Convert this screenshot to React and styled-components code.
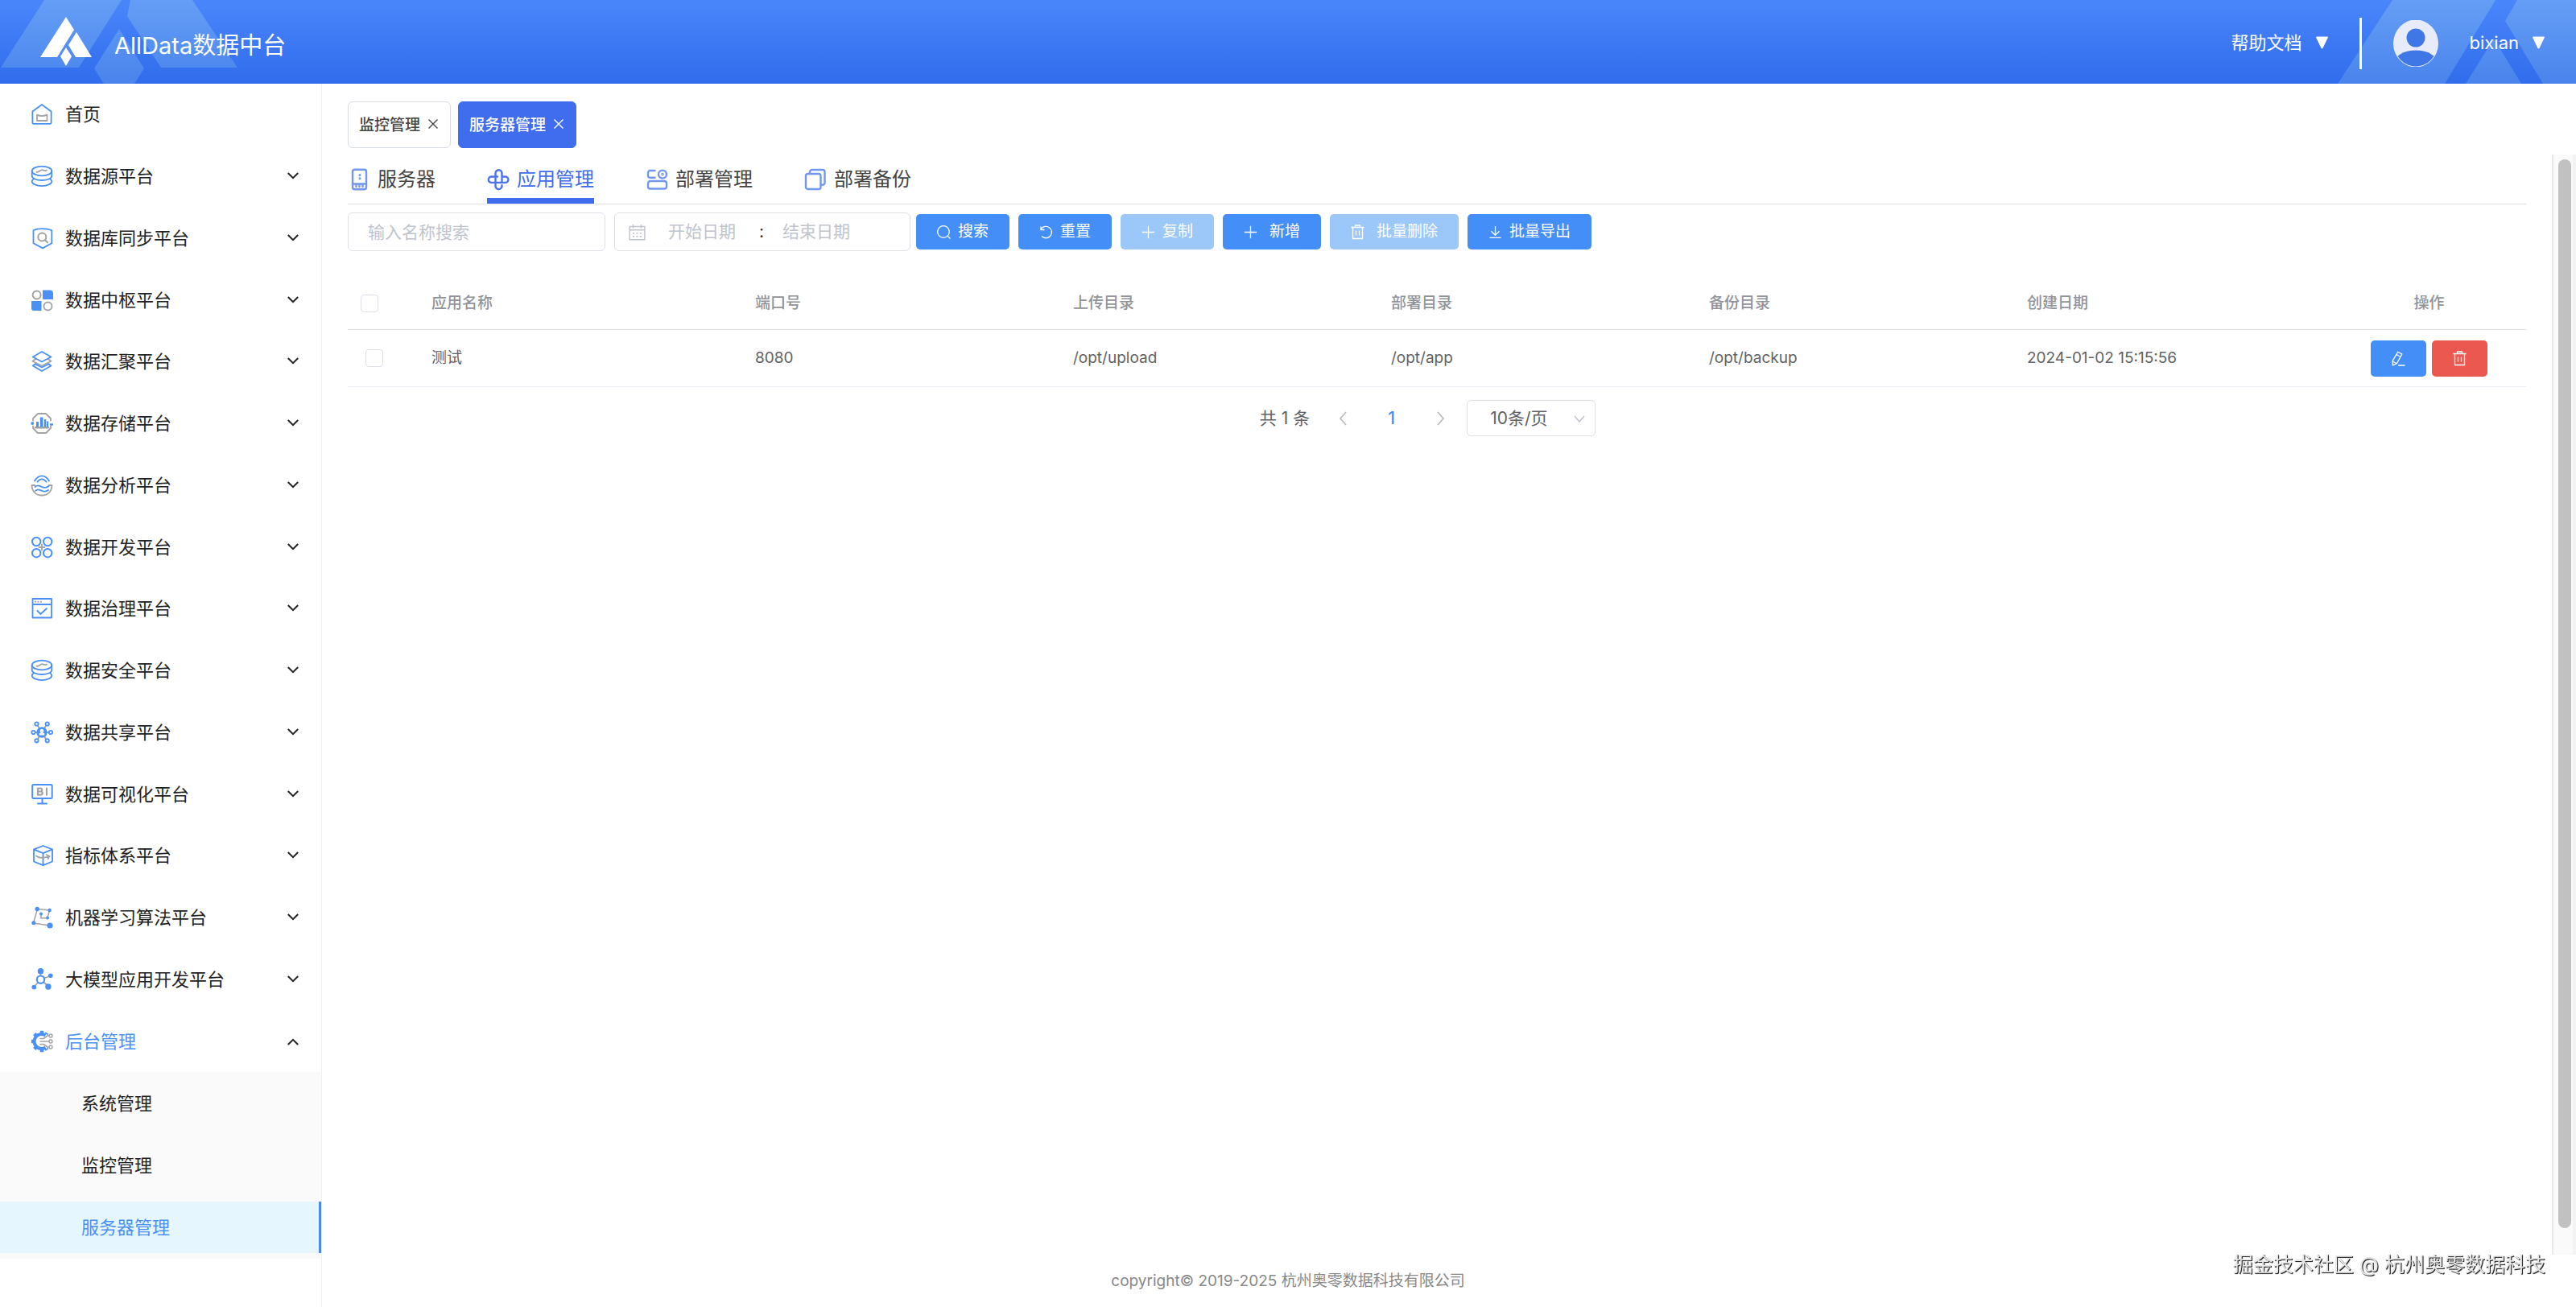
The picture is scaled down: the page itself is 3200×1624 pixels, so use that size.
import React from "react";
import styled, { createGlobalStyle, css } from "styled-components";

const GlobalStyle = createGlobalStyle`
  * {
    box-sizing: border-box;
  }

  body {
    margin: 0;
    background: #fff;
    color: #222;
    font-family: Inter, "Noto Sans CJK SC", sans-serif;
    font-size: 19px;
    line-height: 28px;
  }

  button, input, select {
    font-family: inherit;
    font-size: inherit;
    line-height: inherit;
    margin: 0;
  }

  button {
    padding: 0;
    border: 0;
    background: none;
    color: inherit;
    cursor: pointer;
  }

  a {
    color: inherit;
    text-decoration: none;
  }

  svg {
    display: block;
    flex-shrink: 0;
  }
`;

const Page = styled.div`
  min-height: 100vh;
  display: flex;
  flex-direction: column;
`;

/* ---------- header ---------- */

const Header = styled.header`
  position: relative;
  height: 104px;
  display: flex;
  align-items: center;
  justify-content: space-between;
  padding: 0 39px 0 50px;
  color: #fff;
  background: linear-gradient(#4a86fb, #316cec);

  .left-shape,
  .right-shape {
    position: absolute;
    top: 0;
  }

  .left-shape {
    left: 0;
  }

  .right-shape {
    right: 0;
  }
`;

const Brand = styled.a`
  position: relative;
  display: flex;
  align-items: center;
  gap: 28px;
  font-size: 29px;
  line-height: 40px;

  span {
    padding-top: 10px;
  }
`;

const HeaderRight = styled.div`
  position: relative;
  display: flex;
  align-items: center;
  font-size: 22px;
`;

const HeaderMenu = styled.button`
  padding-top: 2px;
  display: flex;
  align-items: center;
  gap: 17px;
`;

const Divider = styled.span`
  width: 3px;
  height: 64px;
  margin: 4px 39px 0;
  background: #fff;
`;

const Avatar = styled.span`
  margin: 4px 39px 0 0;
`;

/* ---------- sidebar ---------- */

const Body = styled.div`
  flex: 1;
  display: flex;
`;

const Sidebar = styled.nav`
  width: 400px;
  flex-shrink: 0;
  border-right: 1px solid #f0f0f0;
`;

const MenuList = styled.ul`
  height: 1228px;
  margin: 0;
  padding: 0;
  list-style: none;
  display: grid;
  grid-auto-rows: 1fr;
`;

const MenuButton = styled.button`
  width: 100%;
  height: 100%;
  padding: 0 28px 0 38px;
  display: flex;
  align-items: center;
  gap: 15px;
  font-size: 22px;
  color: ${({ $active }) => ($active ? "#4a90f5" : "#222")};

  .label {
    flex: 1;
    text-align: left;
  }

  .arrow {
    color: #222;
    transform: ${({ $active }) => ($active ? "rotate(180deg)" : "none")};
  }
`;

const SubMenu = styled.ul`
  margin: 0;
  padding: 7px 0;
  list-style: none;
  background: #fafafa;
  display: flex;
  flex-direction: column;
  gap: 13px;
`;

const SubLink = styled.a`
  height: 64px;
  display: flex;
  align-items: center;
  padding-left: 101px;
  font-size: 22px;

  ${({ $active }) =>
    $active &&
    css`
      color: #4a90f5;
      background: #e6f6fe;
      border-right: 3px solid #4a8bec;
    `}
`;

/* ---------- main ---------- */

const Main = styled.main`
  flex: 1;
  min-width: 0;
  display: flex;
  flex-direction: column;
`;

const TagBar = styled.div`
  display: flex;
  gap: 9px;
  padding: 22px 32px 8px;
`;

const Tag = styled.div`
  height: 58px;
  display: flex;
  align-items: center;
  gap: 9px;
  padding: 0 14px 0 13px;
  border: 1px solid ${({ $active }) => ($active ? "#3f6ded" : "#d8dce5")};
  border-radius: 6px;
  font-weight: 500;
  color: ${({ $active }) => ($active ? "#fff" : "#444")};
  background: ${({ $active }) => ($active ? "#3f6ded" : "#fff")};

  a {
    padding-top: 2px;
  }
`;

const Scroller = styled.div`
  flex: 1;
  display: flex;
`;

const Content = styled.section`
  flex: 1;
  min-width: 0;
  padding: 0 32px;
`;

const Rail = styled.div`
  width: 30px;
  padding: 6px 2px 33px 6px;
  display: flex;
  background: #fafafa;
  border-left: 2px solid #e8e8e8;
  border-right: 4px solid #f3f3f3;

  span {
    width: 16px;
    border-radius: 8px;
    background: #c1c1c1;
  }
`;

const Tabs = styled.div`
  display: flex;
  gap: 64px;
  border-bottom: 1px solid #dfe2e6;
`;

const Tab = styled.button`
  height: 61px;
  padding-top: 7px;
  display: flex;
  align-items: center;
  gap: 9px;
  font-size: 24px;
  color: ${({ $active }) => ($active ? "#3f6ded" : "#444")};
  border-bottom: 7px solid ${({ $active }) => ($active ? "#3f6ded" : "transparent")};

  svg {
    color: ${({ $active }) => ($active ? "#4a74ea" : "#7396f0")};
  }
`;

const Toolbar = styled.form`
  display: flex;
  align-items: center;
  gap: 7px;
  margin: 10px 0 31px;
`;

const Group = styled.div`
  display: flex;
  align-items: center;
  gap: 11px;
`;

const field = css`
  height: 48px;
  border: 1px solid #dcdfe6;
  border-radius: 6px;
  background: #fff;
  font-size: 21px;
  color: #606266;

  ::placeholder,
  &::placeholder {
    color: #c0c4cc;
    opacity: 1;
  }
`;

const SearchInput = styled.input`
  ${field}
  width: 320px;
  padding: 0 24px;
`;

const DateRange = styled.div`
  ${field}
  width: 368px;
  padding-left: 17px;
  display: flex;
  align-items: center;

  svg {
    margin-right: 5px;
    color: #c0c4cc;
  }

  input {
    width: 130px;
    padding: 0;
    border: 0;
    outline: 0;
    text-align: center;
  }

  span {
    width: 12px;
    text-align: right;
    color: #303133;
  }
`;

const Button = styled.button`
  height: 44px;
  padding: 0 26px 0 25px;
  display: flex;
  align-items: center;
  gap: ${({ $wide }) => ($wide ? 14 : 8)}px;
  border-radius: 5px;
  color: #fff;
  background: #448ef7;

  &:disabled {
    background: #9cc7f9;
    cursor: not-allowed;
  }
`;

const Table = styled.table`
  width: 100%;
  table-layout: fixed;
  border-collapse: separate;
  border-spacing: 0;
  color: #606266;

  th,
  td {
    padding: 0 16px;
    text-align: left;
    border-bottom: 1px solid #dfe2e6;
  }

  th {
    height: 67px;
    padding-top: 2px;
    font-weight: 500;
    color: #909399;
  }

  td {
    height: 71px;
    border-bottom-color: #ebeef5;
  }

  td:first-child {
    padding-left: 22px;
  }

  th:last-child {
    text-align: center;
  }

  .check {
    width: 88px;
  }

  .name {
    width: 402px;
  }

  .actions {
    width: 241px;
  }
`;

const Checkbox = styled.input`
  appearance: none;
  display: block;
  width: 22px;
  height: 22px;
  border: 1px solid #dcdfe6;
  border-radius: 4px;
  background: #fff;

  &:checked {
    background: #448ef7;
  }
`;

const RowActions = styled.div`
  display: flex;
  justify-content: center;
  gap: 7px;
`;

const ActionButton = styled.button`
  width: 69px;
  height: 45px;
  display: grid;
  place-items: center;
  border-radius: 5px;
  color: #fff;
  background: ${({ $danger }) => ($danger ? "#ea5850" : "#448ef7")};
`;

const Pagination = styled.div`
  display: flex;
  align-items: center;
  justify-content: center;
  margin-top: 16px;
  padding-right: 23px;
  font-size: 21px;
  color: #606266;

  .total {
    margin-right: 10px;
  }
`;

const PageButton = styled.button`
  width: 61px;
  height: 45px;
  display: grid;
  place-items: center;
  font-weight: 500;
  color: ${({ $active }) => ($active ? "#448ef7" : "#b4b8bf")};
`;

const PageSize = styled.div`
  position: relative;
  margin-left: 2px;

  select {
    appearance: none;
    width: 160px;
    height: 45px;
    padding: 0 28px;
    border: 1px solid #dcdfe6;
    border-radius: 5px;
    background: #fff;
    color: #606266;
  }

  svg {
    position: absolute;
    right: 13px;
    top: 18px;
    color: #c0c4cc;
    pointer-events: none;
  }
`;

const Footer = styled.footer`
  height: 65px;
  padding-right: 400px;
  display: grid;
  place-items: center;
  color: #888;
`;

const Watermark = styled.div`
  position: fixed;
  right: 38px;
  bottom: 35px;
  font-size: 25px;
  line-height: 36px;
  color: #e8e8e8;
  text-shadow: 1px 1px 1px #222, 1px 1px 0 #555;
`;

/* ---------- icons ---------- */

const BLUE = "#4a90f5";
const GRAY = "#a3a3a3";

const MenuIcon = ({ children }) => (
  <svg width="28" height="28" viewBox="0 0 28 28" fill="none" stroke={BLUE} strokeWidth="1.8" strokeLinejoin="round" strokeLinecap="round" aria-hidden="true">
    {children}
  </svg>
);

const HomeIcon = () => (
  <MenuIcon>
    <path d="M2.4 10.4 14 2l11.6 8.4v14.2a1.2 1.2 0 0 1-1.2 1.2H3.6a1.2 1.2 0 0 1-1.2-1.2z" />
    <path stroke={GRAY} d="M8 14.600c3.500 2 8 2 12.500 0v7.400H8z" />
  </MenuIcon>
);

const DatabaseIcon = () => (
  <MenuIcon>
    <ellipse cx="14" cy="7.5" rx="12.3" ry="5.9" />
    <path d="M1.7 7.5v6c0 3.2 5.5 5.5 12.3 5.5s12.300-2.300 12.300-5.500v-6" />
    <path d="M4 17.2c-1.500.9-2.300 2-2.300 3.100 0 3.200 5.500 5.800 12.300 5.800s12.300-2.600 12.300-5.800c0-1.100-.8-2.200-2.300-3.100" />
    <path stroke={GRAY} d="M7.5 8.600c2.500 1.200 4.300-2.700 7-2.400 2 .2 2.800 1.600 5.500.5" />
  </MenuIcon>
);

const ShieldIcon = () => (
  <MenuIcon>
    <path d="M3.5 4.3C9 1.300 20 1.300 26.300 4.300v16L15 26.400 3.500 20.300z" />
    <circle cx="14.3" cy="12.5" r="5" stroke={GRAY} strokeWidth="2" />
    <path stroke={GRAY} strokeWidth="2.2" d="m18 16.200 3 3" />
  </MenuIcon>
);

const HubIcon = () => (
  <MenuIcon>
    <circle cx="7.6" cy="7.5" r="5" stroke={GRAY} strokeWidth="1.9" />
    <circle cx="21.5" cy="21.5" r="5" stroke={GRAY} strokeWidth="1.9" />
    <path fill={BLUE} stroke="none" d="M15 1.500h9a4 4 0 0 1 4 4V13H15zM1 15h12.500v12H4a3 3 0 0 1-3-3z" />
  </MenuIcon>
);

const LayersIcon = () => (
  <MenuIcon>
    <path stroke={GRAY} d="m6.500 11-4 2.700L14 19.500l11.500-5.800-4-2.700" />
    <path d="m5.800 17.200-3 2.300L14 26l11.500-6.500-3-2.300L14 21.500z" />
    <path fill="#fff" d="M14 2 2.800 8.500 14 14.500l11.500-6z" />
  </MenuIcon>
);

const StorageIcon = () => (
  <MenuIcon>
    <path stroke={GRAY} d="M3 10.500V8l6-6h10l6 6v2.500M3 17.500V20l6 6h10l6-6v-2.500" />
    <path stroke={GRAY} strokeWidth="2.4" d="M6 19.300h16" />
    <path stroke="none" fill={BLUE} d="M7 12h3v6.500H7zM11.800 6.500h3.600v12h-3.600zM16.800 9h2.400v9.500h-2.400zM20 11.500h2.200v7H20z" />
    <circle cx="2.2" cy="14" r="1.9" fill={BLUE} stroke="none" />
    <path strokeWidth="2.4" d="M25 15.500h2" />
  </MenuIcon>
);

const AnalysisIcon = () => (
  <MenuIcon>
    <path d="M5 8.500C9.500.200 18.500.200 23 8.500M8.500 9.800c3-4.700 8-4.700 11 0" />
    <path stroke={GRAY} d="M5.500 14H1.500c0 7.500 5.500 12.500 12.500 12.500S26.500 21.500 26.500 14h-4" />
    <path d="M5.500 16c3-2.500 5-1.700 8.500 0 3 1.500 5.500 1.500 8.500-1M6 20.800c3-2.300 5-1.500 8 0 3 1.500 5 1.300 8-.8" />
  </MenuIcon>
);

const DevIcon = () => (
  <MenuIcon>
    <path stroke={GRAY} d="M14 10.500v7M10.500 14h7" />
    {[7.2, 21.2].map((cx) =>
      [7, 21.2].map((cy) => <circle key={cx + "-" + cy} cx={cx} cy={cy} r="5.2" strokeWidth="2" />)
    )}
  </MenuIcon>
);

const GovernIcon = () => (
  <MenuIcon>
    <path d="M2.500 2h23.500v23.500H2.500zM2.500 9H26M8.500 17l4 4 7.500-7" />
    <path stroke={GRAY} strokeDasharray="2 1.5" strokeLinecap="butt" d="M5 5.700h9" />
  </MenuIcon>
);

const ShareIcon = () => (
  <MenuIcon>
    <path stroke={GRAY} d="M8.500 5 19.500 23M19.500 5 8.500 23M5 14h18" />
    <circle cx="14" cy="14" r="5.8" fill={BLUE} />
    <path stroke="none" fill="#fff" d="M14 9.800a2.500 2.500 0 0 1 1.300 4.600l2 .9v2.200h-6.600v-2.200l2-.9A2.500 2.500 0 0 1 14 9.800z" />
    {[[7.5, 3.5], [20.7, 3.5], [3.5, 14], [25, 14], [7.5, 24.3], [20.7, 24.3]].map(([x, y]) => (
      <circle key={x + "-" + y} cx={x} cy={y} r="2.2" fill="#fff" />
    ))}
  </MenuIcon>
);

const BiIcon = () => (
  <MenuIcon>
    <rect x="2.2" y="2" width="24.5" height="17" rx="1.5" strokeWidth="2" />
    <path strokeWidth="2" d="M14.500 19v6M9 25.600h11" />
    <path stroke={GRAY} strokeWidth="2.2" d="M9 6.500v8.200h3.700a2 2 0 0 0 0-4.200H9h3.200a2 2 0 0 0 0-4zM20 6.500v8.200" />
  </MenuIcon>
);

const CubeIcon = () => (
  <MenuIcon>
    <path d="M15.500 2 27 6.300v15.200l-11.500 4.700L4 21.500V6.300zM4 6.300l11.500 4.800L27 6.300M15.500 11.100v15" />
    <path stroke={GRAY} d="M7 14.500c3 2.500 9 3 16 .5m-3.500-2 4 1.800-2 3.500" />
  </MenuIcon>
);

const MlIcon = () => (
  <MenuIcon>
    <path stroke={GRAY} strokeWidth="1.5" d="M24 24 3.500 21 8.500 3.500l15 1.500-2.500 9.500-8 .5V9.500" />
    <g fill={BLUE} stroke="none">
      <circle cx="8.2" cy="3.5" r="2.7" />
      <circle cx="23.6" cy="5" r="2.2" />
      <circle cx="3.8" cy="20.8" r="2.5" />
      <circle cx="24" cy="24" r="3.6" />
      <circle cx="21" cy="14.6" r="2" />
      <circle cx="13" cy="9.5" r="2" />
    </g>
  </MenuIcon>
);

const ModelIcon = () => (
  <MenuIcon>
    <path stroke={GRAY} d="M12.500 4v10L4 23.500M12.500 14 25 9.500M12.500 14 22 22.500" />
    <g fill={BLUE} stroke="none">
      <circle cx="12.5" cy="3.8" r="3.8" />
      <circle cx="24.8" cy="9.3" r="2.8" />
      <circle cx="4.3" cy="23.6" r="2.9" />
      <circle cx="21.9" cy="23" r="3.7" />
    </g>
    <circle cx="12.5" cy="14.2" r="4.7" fill="#fff" strokeWidth="2.2" />
  </MenuIcon>
);

const AdminIcon = () => (
  <MenuIcon>
    <path strokeWidth="4" strokeLinecap="butt" d="M18.500 6.500A9 9 0 1 0 18.500 21.500" />
    <path strokeWidth="4.5" strokeLinecap="butt" d="M14 4V.800M14 24v3.200M4 14H1M7.500 7.500 4.700 4.700M7.500 20.500l-2.800 2.800M19.500 5l1-1.500M19.500 23l1 1.500" />
    <path stroke={GRAY} strokeWidth="1.6" d="M12 10.500h4l5-3.500h2M12 14h11M12 17.500h4l5 3.500h2" />
    <g stroke={GRAY} strokeWidth="1.4" fill="#fff">
      <circle cx="25" cy="7" r="2" />
      <circle cx="25" cy="14" r="2" />
      <circle cx="25" cy="21" r="2" />
    </g>
  </MenuIcon>
);

const Arrow = () => (
  <svg className="arrow" width="14" height="10" viewBox="0 0 14 10" fill="none" stroke="currentColor" strokeWidth="2" aria-hidden="true">
    <path d="m.8 1 6.200 6.200L13.200 1" />
  </svg>
);

const Caret = () => (
  <svg width="15" height="16" viewBox="0 0 15 16" fill="#fff" aria-hidden="true">
    <path d="M1 .500h13c.8 0 1.100.6.800 1.300L8.700 14.500c-.6 1.200-1.800 1.200-2.400 0L.200 1.800C-.100 1.100.200.500 1 .500z" />
  </svg>
);

const TabIcon = ({ children }) => (
  <svg width="28" height="28" viewBox="0 0 28 28" fill="none" stroke="currentColor" strokeWidth="2.4" strokeLinejoin="round" strokeLinecap="round" aria-hidden="true">
    {children}
  </svg>
);

const ServerIcon = () => (
  <TabIcon>
    <path d="M8.500 1.700h12a2.500 2.500 0 0 1 2.500 2.500v19.600a2.500 2.500 0 0 1-2.500 2.500h-12A2.500 2.500 0 0 1 6 23.800V4.200a2.500 2.500 0 0 1 2.500-2.500zM6 19.500h17" />
    <path d="M10.500 20v3M14.500 20v3M18.500 20v3" />
    <path strokeWidth="3" d="M15 8.500v.1M15 12.700v.1" />
  </TabIcon>
);

const CloverIcon = () => (
  <TabIcon>
    <path d="M10.500 17.500V6.200a4 4 0 0 1 8 0v11.300M10.500 17.500v4.700a4 4 0 0 0 7 2.500M18.500 10.500h4.200a3.700 3.700 0 0 1 0 7.400H12M12 17.900H5.500a3.700 3.700 0 0 1 0-7.400h7.500M17.500 24.700c.7-.8 1-1.600 1-2.500v-1" />
  </TabIcon>
);

const DeployIcon = () => (
  <TabIcon>
    <path d="M11.500 3H5.500A2.500 2.500 0 0 0 3 5.500v3.800a2.500 2.500 0 0 0 2.500 2.500h6" />
    <circle cx="21" cy="7.6" r="5" />
    <circle cx="21" cy="7.6" r=".6" />
    <rect x="3" y="16" width="23" height="9.5" rx="2.8" />
  </TabIcon>
);

const BackupIcon = () => (
  <TabIcon>
    <rect x="2" y="7" width="18.5" height="19" rx="2.5" />
    <path d="M7 6.500V4.500A2.500 2.500 0 0 1 9.500 2H23a2.500 2.500 0 0 1 2.500 2.500v13.700a2.500 2.500 0 0 1-2.500 2.500h-2" />
  </TabIcon>
);

const LineIcon = ({ size = 19, children }) => (
  <svg width={size} height={size} viewBox="0 0 19 19" fill="none" stroke="currentColor" strokeWidth="1.3" aria-hidden="true">
    {children}
  </svg>
);

const SearchIcon = () => (
  <LineIcon>
    <circle cx="9" cy="9" r="7.3" />
    <path d="m14.200 14.200 3.300 3.300" />
  </LineIcon>
);

const ResetIcon = () => (
  <LineIcon>
    <path d="M3.300 5.500A7.200 7.200 0 1 1 4 14.500M3 2.500v4h4.500" />
  </LineIcon>
);

const PlusIcon = () => (
  <LineIcon>
    <path d="M9.500 1.800v15.400M1.800 9.500h15.400" />
  </LineIcon>
);

const TrashIcon = () => (
  <LineIcon>
    <path d="M1.500 3.500h16M3.500 3.500v14h12v-14M6.500 3.500v-2.500h6v2.500M7.500 7.500v6M11.500 7.500v6" />
  </LineIcon>
);

const DownloadIcon = () => (
  <LineIcon>
    <path d="M9.500 2v11M4.500 8.300l5 5 5-5M2.500 16.300h14" />
  </LineIcon>
);

const EditIcon = () => (
  <LineIcon>
    <path d="M8.700 1.300 13.800 4 7.300 15.700l-4.800 2.200-.5-5.200zM6.900 4.500l5.100 2.800M2.200 13l5 2.700M9 18h8.500" />
  </LineIcon>
);

const CalendarIcon = () => (
  <LineIcon size={21}>
    <path d="M1 3.200h17v14.600H1zM1 7h17M5 1v4M14 1v4" />
    <path strokeDasharray="2 2" d="M4.500 10.700h10M4.500 14.200h10" />
  </LineIcon>
);

const CloseIcon = () => (
  <svg width="14" height="14" viewBox="0 0 14 14" fill="none" stroke="currentColor" strokeWidth="1.4" aria-hidden="true">
    <path d="m1.500 0.500 11 11M12.500 0.500l-11 11" />
  </svg>
);

const Chevron = ({ d, width = 12, height = 20 }) => (
  <svg width={width} height={height} viewBox={`0 0 ${width} ${height}`} fill="none" stroke="currentColor" strokeWidth="1.6" aria-hidden="true">
    <path d={d} />
  </svg>
);

const menu = [
  { label: "首页", icon: HomeIcon, single: true },
  { label: "数据源平台", icon: DatabaseIcon },
  { label: "数据库同步平台", icon: ShieldIcon },
  { label: "数据中枢平台", icon: HubIcon },
  { label: "数据汇聚平台", icon: LayersIcon },
  { label: "数据存储平台", icon: StorageIcon },
  { label: "数据分析平台", icon: AnalysisIcon },
  { label: "数据开发平台", icon: DevIcon },
  { label: "数据治理平台", icon: GovernIcon },
  { label: "数据安全平台", icon: DatabaseIcon },
  { label: "数据共享平台", icon: ShareIcon },
  { label: "数据可视化平台", icon: BiIcon },
  { label: "指标体系平台", icon: CubeIcon },
  { label: "机器学习算法平台", icon: MlIcon },
  { label: "大模型应用开发平台", icon: ModelIcon },
  { label: "后台管理", icon: AdminIcon, active: true },
];

const subMenu = ["系统管理", "监控管理", "服务器管理"];

const tabs = [
  { label: "服务器", icon: ServerIcon },
  { label: "应用管理", icon: CloverIcon },
  { label: "部署管理", icon: DeployIcon },
  { label: "部署备份", icon: BackupIcon },
];

const actions = [
  { label: "搜索", icon: SearchIcon },
  { label: "重置", icon: ResetIcon },
  { label: "复制", icon: PlusIcon, disabled: true },
  { label: "新增", icon: PlusIcon, wide: true },
  { label: "批量删除", icon: TrashIcon, disabled: true, wide: true },
  { label: "批量导出", icon: DownloadIcon },
];

const rows = [
  {
    name: "测试",
    port: "8080",
    upload: "/opt/upload",
    deploy: "/opt/app",
    backup: "/opt/backup",
    created: "2024-01-02 15:15:56",
  },
];

function TopBar() {
  return (
    <Header>
      <svg className="left-shape" width="300" height="104" viewBox="0 0 300 104" aria-hidden="true">
        <defs>
          <linearGradient id="shape" x1="0" y1="0" x2="0" y2="104" gradientUnits="userSpaceOnUse">
            <stop offset="0" stopColor="#96cdeb" stopOpacity=".34" />
            <stop offset="1" stopColor="#96cdeb" stopOpacity=".24" />
          </linearGradient>
        </defs>
        <path fill="url(#shape)" d="M55 0h96L98 84H1zM162 0h77l56 84h-95L158 20zM148 36l31 49-12 19h-38l-12-19z" />
      </svg>
      <svg className="right-shape" width="300" height="104" viewBox="0 0 300 104" aria-hidden="true">
        <path fill="url(#shape)" d="M72 0h128l-63 104H4zM227 0h73v104h-41L212 26zM163 104l35-56 34 56z" />
      </svg>
      <Brand href="#">
        <svg width="64" height="62" viewBox="50 16 64 62" fill="#fff" aria-hidden="true">
          <path d="m82 16 10 16-21 34H50zM95 35l19 31H94l-9-15zM82 54l7 11-7 12-7-12z" />
        </svg>
        <span>AllData数据中台</span>
      </Brand>
      <HeaderRight>
        <HeaderMenu>
          帮助文档
          <Caret />
        </HeaderMenu>
        <Divider />
        <Avatar>
          <svg width="56" height="58" viewBox="0 0 56 58" aria-hidden="true">
            <clipPath id="face">
              <ellipse cx="28" cy="29" rx="27" ry="28.5" />
            </clipPath>
            <ellipse cx="28" cy="29" rx="28" ry="29.5" fill="#e8ecfa" />
            <g fill="#3f78e6" clipPath="url(#face)">
              <circle cx="28" cy="22" r="11.5" />
              <ellipse cx="28" cy="55" rx="28" ry="17.5" />
            </g>
          </svg>
        </Avatar>
        <HeaderMenu>
          bixian
          <Caret />
        </HeaderMenu>
      </HeaderRight>
    </Header>
  );
}

function SideMenu() {
  return (
    <Sidebar>
      <MenuList>
        {menu.map(({ label, icon: Icon, single, active }) => (
          <li key={label}>
            <MenuButton $active={active}>
              <Icon />
              <span className="label">{label}</span>
              {!single && <Arrow />}
            </MenuButton>
          </li>
        ))}
      </MenuList>
      <SubMenu>
        {subMenu.map((label) => (
          <li key={label}>
            <SubLink href="#" $active={label === "服务器管理"}>
              {label}
            </SubLink>
          </li>
        ))}
      </SubMenu>
    </Sidebar>
  );
}

function AppTable() {
  return (
    <Table>
      <colgroup>
        <col className="check" />
        <col className="name" />
        <col span={5} />
        <col className="actions" />
      </colgroup>
      <thead>
        <tr>
          <th>
            <Checkbox type="checkbox" aria-label="全选" />
          </th>
          <th>应用名称</th>
          <th>端口号</th>
          <th>上传目录</th>
          <th>部署目录</th>
          <th>备份目录</th>
          <th>创建日期</th>
          <th>操作</th>
        </tr>
      </thead>
      <tbody>
        {rows.map((row) => (
          <tr key={row.name}>
            <td>
              <Checkbox type="checkbox" aria-label={row.name} />
            </td>
            <td>{row.name}</td>
            <td>{row.port}</td>
            <td>{row.upload}</td>
            <td>{row.deploy}</td>
            <td>{row.backup}</td>
            <td>{row.created}</td>
            <td>
              <RowActions>
                <ActionButton aria-label="编辑">
                  <EditIcon />
                </ActionButton>
                <ActionButton $danger aria-label="删除">
                  <TrashIcon />
                </ActionButton>
              </RowActions>
            </td>
          </tr>
        ))}
      </tbody>
    </Table>
  );
}

function App() {
  return (
    <Page>
      <GlobalStyle />
      <TopBar />
      <Body>
        <SideMenu />
        <Main>
          <TagBar>
            <Tag>
              <a href="#">监控管理</a>
              <button aria-label="关闭">
                <CloseIcon />
              </button>
            </Tag>
            <Tag $active>
              <a href="#">服务器管理</a>
              <button aria-label="关闭">
                <CloseIcon />
              </button>
            </Tag>
          </TagBar>
          <Scroller>
            <Content>
              <Tabs>
                {tabs.map(({ label, icon: Icon }) => (
                  <Tab key={label} $active={label === "应用管理"}>
                    <Icon />
                    {label}
                  </Tab>
                ))}
              </Tabs>
              <Toolbar onSubmit={(e) => e.preventDefault()}>
                <Group>
                  <SearchInput placeholder="输入名称搜索" aria-label="输入名称搜索" />
                  <DateRange>
                    <CalendarIcon />
                    <input placeholder="开始日期" aria-label="开始日期" />
                    <span>:</span>
                    <input placeholder="结束日期" aria-label="结束日期" />
                  </DateRange>
                </Group>
                <Group>
                  {actions.map(({ label, icon: Icon, disabled, wide }) => (
                    <Button key={label} type="button" disabled={disabled} $wide={wide}>
                      <Icon />
                      {label}
                    </Button>
                  ))}
                </Group>
              </Toolbar>
              <AppTable />
              <Pagination>
                <span className="total">共 1 条</span>
                <PageButton aria-label="上一页">
                  <Chevron d="M10 2 3 10l7 8" />
                </PageButton>
                <PageButton $active>1</PageButton>
                <PageButton aria-label="下一页">
                  <Chevron d="m2 2 7 8-7 8" />
                </PageButton>
                <PageSize>
                  <select aria-label="每页条数" defaultValue="10">
                    <option value="10">10条/页</option>
                    <option value="20">20条/页</option>
                    <option value="50">50条/页</option>
                  </select>
                  <Chevron width={14} height={12} d="m1 2 6 7 6-7" />
                </PageSize>
              </Pagination>
            </Content>
            <Rail>
              <span />
            </Rail>
          </Scroller>
          <Footer>copyright© 2019-2025 杭州奥零数据科技有限公司</Footer>
        </Main>
      </Body>
      <Watermark>掘金技术社区 @ 杭州奥零数据科技</Watermark>
    </Page>
  );
}

export default App;
